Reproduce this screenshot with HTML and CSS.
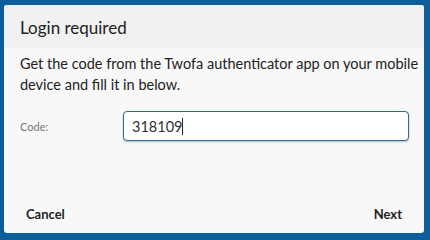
FILE: index.html
```html
<!DOCTYPE html>
<html>
<head>
<meta charset="utf-8">
<link rel="stylesheet" href="styles.css">
</head>
<body>
<div class="dialog">
  <div class="dialog-header">Login required</div>
  <div class="dialog-body">
    <p class="intro">Get the code from the Twofa authenticator app on your mobile device and fill it in below.</p>
    <div class="field">
      <label class="field-label">Code:</label>
      <div class="field-input"><span>318109</span><span class="caret"></span></div>
    </div>
  </div>
  <div class="dialog-footer">
    <button class="btn">Cancel</button>
    <button class="btn">Next</button>
  </div>
</div>
</body>
</html>
```
FILE: styles.css
```css
html, body {
  margin: 0;
  padding: 0;
}
body {
  background: #0b5e99;
  width: 430px;
  height: 239px;
  overflow: hidden;
  font-family: Lato, "Open Sans", sans-serif;
  color: #222;
}
.dialog {
  margin: 5px 0 0 4px;
  width: 420px;
  height: 228px;
  background: #f8f8f8;
  border-radius: 3px;
  display: flex;
  flex-direction: column;
  overflow: hidden;
}
.dialog-header {
  height: 43px;
  background: #f1f1f1;
  display: flex;
  align-items: center;
  padding-left: 16px;
  font-size: 17px;
  color: #222;
  padding-top: 1px;
  box-sizing: border-box;
}
.dialog-body {
  padding: 5px 0 0 16px;
  flex: 1;
}
.intro {
  margin: 0;
  font-size: 14.5px;
  line-height: 21px;
  color: #222;
}
.field {
  display: flex;
  align-items: center;
  margin-top: 16px;
}
.field-label {
  width: 103px;
  font-size: 11px;
  color: #777;
}
.field-input {
  width: 286px;
  height: 30px;
  box-sizing: border-box;
  border: 1px solid #2a6a93;
  border-radius: 4px;
  background: #fff;
  box-shadow: 0 1px 2px rgba(0,0,0,0.25);
  display: flex;
  align-items: center;
  padding-left: 8px;
  font-size: 14.5px;
  color: #333;
}
.caret {
  display: inline-block;
  width: 1px;
  height: 17px;
  background: #222;
}
.dialog-footer {
  display: flex;
  justify-content: space-between;
  padding: 0 22px 2px 22px;
  height: 36px;
  align-items: center;
  box-sizing: border-box;
}
.btn {
  border: none;
  background: none;
  font-family: Lato, "Open Sans", sans-serif;
  font-weight: bold;
  font-size: 13px;
  color: #222;
  padding: 0;
}
```
